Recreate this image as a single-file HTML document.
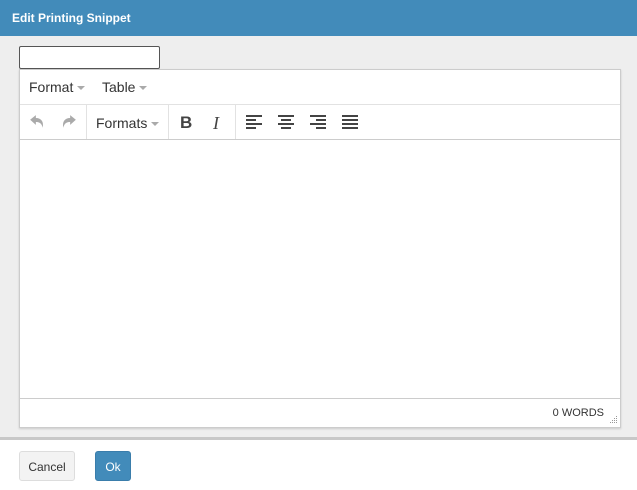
<!DOCTYPE html><html><head><style>
*{box-sizing:border-box;margin:0;padding:0}
body{width:637px;height:490px;background:#fff;font-family:"Liberation Sans",sans-serif;position:relative;overflow:hidden}
.hd{position:absolute;left:0;top:0;width:637px;height:36px;background:#428bba;color:#fff;font-weight:bold;font-size:12px;padding:11px 0 0 12px}
.main{position:absolute;left:0;top:36px;width:637px;height:401px;background:#eee}
.sep{position:absolute;left:0;top:437px;width:637px;height:3px;background:#c8c8c8}
.inp{position:absolute;left:19px;top:46px;width:141px;height:23px;border:1px solid #555;border-radius:2px;background:#fff}
.ed{position:absolute;left:19px;top:69px;width:602px;height:359px;border:1px solid #ccc;background:#fff;box-shadow:0 1px 2px rgba(0,0,0,.15)}
.mb{height:35px;border-bottom:1px solid #e2e2e2;font-size:14px;color:#333;position:relative}
.mb span{position:absolute;top:9px}
.car{display:inline-block;width:0;height:0;border-left:4px solid transparent;border-right:4px solid transparent;border-top:4px solid #aaa;vertical-align:middle;margin-left:4px}
.tb{height:35px;border-bottom:1px solid #ccc;position:relative}
.v{position:absolute;top:0;width:1px;height:34px;background:#e2e2e2}
.sb{position:absolute;left:0;top:328px;width:600px;height:29px;border-top:1px solid #ccc;font-size:11px;color:#333}
.btn{position:absolute;top:451px;height:30px;border-radius:3px;font-size:12px;text-align:center;padding-top:8px}
</style></head><body>
<div class="hd">Edit Printing Snippet</div>
<div class="main"></div>
<div class="sep"></div>
<div class="inp"></div>
<div class="ed">
<div class="mb"><span style="left:9px">Format<i class="car"></i></span><span style="left:82px">Table<i class="car"></i></span></div>
<div class="tb">
<svg style="position:absolute;left:9px;top:9px" width="16" height="16" viewBox="0 0 14 14"><path d="M1 5 L6 1 L6 3.5 C11 3.5 13 7 12 12 C11 8 9 7 6 7 L6 9.5Z" fill="#aaa"/></svg>
<svg style="position:absolute;left:41px;top:9px" width="16" height="16" viewBox="0 0 14 14"><path d="M13 5 L8 1 L8 3.5 C3 3.5 1 7 2 12 C3 8 5 7 8 7 L8 9.5Z" fill="#aaa"/></svg>
<div class="v" style="left:66px"></div>
<span style="position:absolute;left:76px;top:10px;font-size:14px;color:#333">Formats<i class="car"></i></span>
<div class="v" style="left:148px"></div>
<span style="position:absolute;left:160px;top:8px;font-size:17px;font-weight:bold;color:#444">B</span>
<span style="position:absolute;left:193px;top:8px;font-size:18px;font-style:italic;font-family:'Liberation Serif',serif;color:#444">I</span>
<div class="v" style="left:215px"></div>
<svg style="position:absolute;left:226px;top:10px" width="112" height="15" viewBox="0 0 112 15" fill="#444">
<rect x="0" y="0" width="16" height="2"/><rect x="0" y="4" width="10" height="2"/><rect x="0" y="8" width="16" height="2"/><rect x="0" y="12" width="10" height="2"/>
<rect x="32" y="0" width="16" height="2"/><rect x="35" y="4" width="10" height="2"/><rect x="32" y="8" width="16" height="2"/><rect x="35" y="12" width="10" height="2"/>
<rect x="64" y="0" width="16" height="2"/><rect x="70" y="4" width="10" height="2"/><rect x="64" y="8" width="16" height="2"/><rect x="70" y="12" width="10" height="2"/>
<rect x="96" y="0" width="16" height="2"/><rect x="96" y="4" width="16" height="2"/><rect x="96" y="8" width="16" height="2"/><rect x="96" y="12" width="16" height="2"/>
</svg>
</div>
<div class="sb"><span style="position:absolute;right:16px;top:8px">0 WORDS</span>
<svg style="position:absolute;right:2px;top:17px" width="8" height="8"><g fill="#999"><rect x="6" y="0" width="1" height="1"/><rect x="4" y="2" width="1" height="1"/><rect x="6" y="2" width="1" height="1"/><rect x="2" y="4" width="1" height="1"/><rect x="4" y="4" width="1" height="1"/><rect x="6" y="4" width="1" height="1"/><rect x="0" y="6" width="1" height="1"/><rect x="2" y="6" width="1" height="1"/><rect x="4" y="6" width="1" height="1"/><rect x="6" y="6" width="1" height="1"/></g></svg></div>
</div>
<div class="btn" style="left:19px;width:56px;background:#f3f3f3;border:1px solid #ddd;color:#333">Cancel</div>
<div class="btn" style="left:95px;width:36px;background:#428bba;border:1px solid #3a7dab;color:#fff">Ok</div>
</body></html>
